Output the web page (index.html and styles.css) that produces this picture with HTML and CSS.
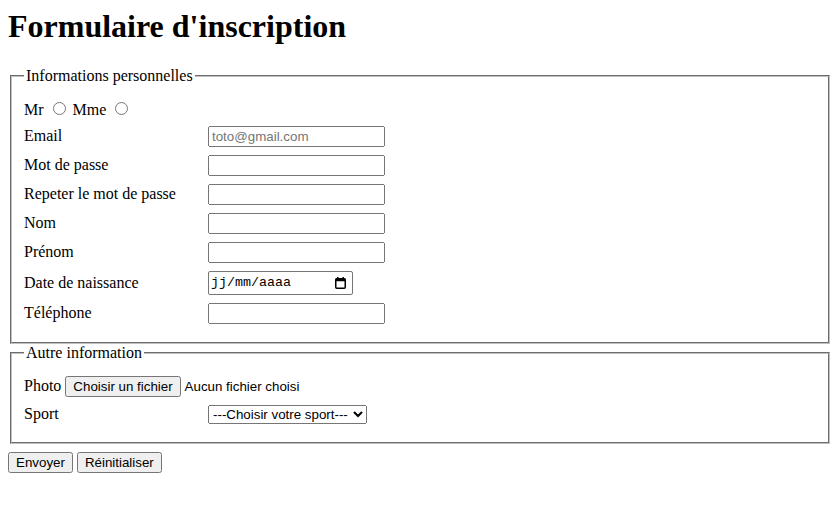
FILE: index.html
```html
<!DOCTYPE html>
<html lang="fr">
<head>
<meta charset="utf-8">
<title>Formulaire d'inscription</title>
<link rel="stylesheet" href="styles.css">
</head>
<body>
<h1 class="title">Formulaire d'inscription</h1>
<form class="form">
  <fieldset class="group">
    <legend class="legend">Informations personnelles</legend>
    <div class="rows">
      <div class="civ">Mr <input class="radio" type="radio" name="civ"> Mme <input class="radio" type="radio" name="civ"></div>
      <div class="row"><label class="lab" for="email">Email</label><input class="field" id="email" type="text" placeholder="toto@gmail.com"></div>
      <div class="row"><label class="lab" for="mdp">Mot de passe</label><input class="field" id="mdp" type="password"></div>
      <div class="row"><label class="lab" for="mdp2">Repeter le mot de passe</label><input class="field" id="mdp2" type="password"></div>
      <div class="row"><label class="lab" for="nom">Nom</label><input class="field" id="nom" type="text"></div>
      <div class="row"><label class="lab" for="prenom">Prénom</label><input class="field" id="prenom" type="text"></div>
      <div class="row row-center"><span class="lab">Date de naissance</span><span class="date-field"><span class="date-text">jj/mm/aaaa</span><svg class="cal" width="11" height="12" viewBox="0 0 11 12"><rect x="2" y="0" width="1.5" height="2" fill="#000"/><rect x="7.5" y="0" width="1.5" height="2" fill="#000"/><rect x="0.75" y="1.75" width="9.5" height="9.5" rx="1" fill="none" stroke="#000" stroke-width="1.5"/><rect x="0.75" y="1.75" width="9.5" height="2.5" fill="#000"/></svg></span></div>
      <div class="row"><label class="lab" for="tel">Téléphone</label><input class="field" id="tel" type="text"></div>
    </div>
  </fieldset>
  <fieldset class="group">
    <legend class="legend">Autre information</legend>
    <div class="rows rows-other">
      <div class="row">Photo<button class="btn file-btn" type="button">Choisir un fichier</button><span class="file-name">Aucun fichier choisi</span></div>
      <div class="row"><label class="lab" for="sport">Sport</label><select class="select" id="sport"><option>---Choisir votre sport---</option><option>Football</option><option>Tennis</option></select></div>
    </div>
  </fieldset>
  <div class="actions"><button class="btn" type="submit">Envoyer</button> <button class="btn" type="reset">Réinitialiser</button></div>
</form>
</body>
</html>
```

FILE: styles.css
```css
html, body {
  background: #fff;
}
body {
  margin: 8px 1px 8px 8px;
  font-family: "Liberation Serif", "Times New Roman", serif;
  font-size: 16px;
  color: #000;
}
.title {
  font-size: 32px;
  font-weight: bold;
  margin: 0 0 22px 0;
  line-height: 37px;
}
.form {
  margin: 0;
}
.group {
  margin: 0 2px;
  padding: 5.6px 12px 10px 12px;
  border: 2px groove #c0c0c0;
}
.legend {
  padding: 0 2px;
}
.rows {
  display: flex;
  flex-direction: column;
  gap: 8px;
  padding: 8px 0;
}
.rows-other {
  padding-top: 9px;
}
.civ {
  line-height: 19px;
  height: 19px;
}
.radio {
  margin: 3px 3px 0 5px;
}
.row {
  display: flex;
  align-items: baseline;
}
.row-center {
  align-items: center;
}
.lab {
  width: 184px;
  flex: none;
}
.field {
  width: 177px;
  height: 21px;
  box-sizing: border-box;
  font: 13.333px "Liberation Sans", Arial, sans-serif;
  padding: 1px 2px;
  margin: 0;
}
.date-field {
  display: inline-flex;
  align-items: center;
  box-sizing: border-box;
  width: 145px;
  height: 24px;
  border: 1px solid #767676;
  border-radius: 2px;
  padding: 0 6px 0 2px;
  background: #fff;
}
.date-text {
  font: 13.333px "Liberation Mono", "Courier New", monospace;
  flex: 1;
}
.cal {
  display: block;
  flex: none;
}
.btn {
  font: 13.333px "Liberation Sans", Arial, sans-serif;
  margin: 0;
  padding: 1px 6px;
}
.file-btn {
  margin: 0 4px;
}
.file-name {
  font: 13.333px "Liberation Sans", Arial, sans-serif;
}
.select {
  font: 13.333px "Liberation Sans", Arial, sans-serif;
  margin: 0;
  width: 159px;
}
.actions {
  margin-top: 8px;
}
```
